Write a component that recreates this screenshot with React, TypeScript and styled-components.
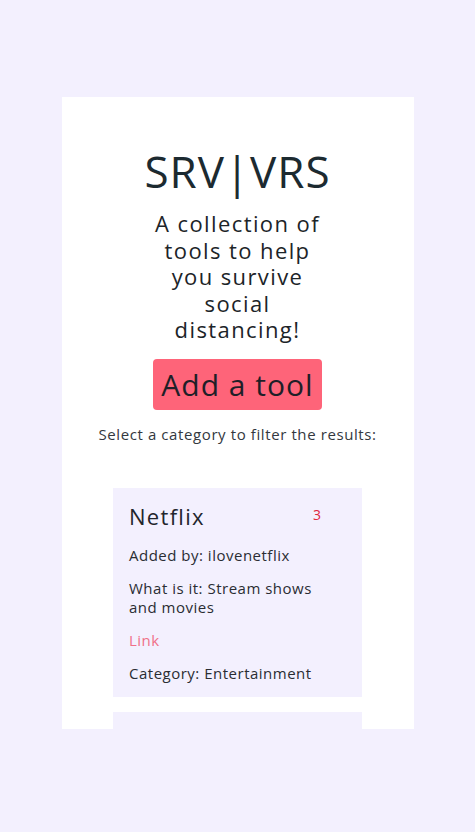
import React from "react";
import styled, { createGlobalStyle } from "styled-components";

const Global = createGlobalStyle`
  html, body { margin: 0; padding: 0; background: #f3f0fe; }
  body { font-family: "Open Sans", "Liberation Sans", sans-serif; color: #1f2428; }
`;

const Page = styled.div`
  padding-top: 97px;
  display: flex;
  justify-content: center;
`;

const Panel = styled.main`
  width: 352px;
  height: 632px;
  background: #ffffff;
  overflow: hidden;
  display: flex;
  flex-direction: column;
  align-items: center;
  box-sizing: border-box;
  padding-top: 47px;
  & > * { flex-shrink: 0; }
`;

const Title = styled.h1`
  margin: 0;
  font-size: 44px;
  font-weight: 400;
  line-height: 54px;
  letter-spacing: 1px;
  color: #1c2a30;
`;

const Subtitle = styled.h2`
  margin: 12px 0 0;
  width: 184px;
  text-align: center;
  font-size: 22px;
  font-weight: 400;
  line-height: 26.5px;
  letter-spacing: 1.4px;
  color: #1c2428;
`;

const AddButton = styled.button`
  margin-top: 16px;
  height: 51px;
  padding: 0 8px;
  border: none;
  border-radius: 4px;
  background: #fe6479;
  color: #1f1f28;
  font-family: inherit;
  font-size: 30px;
  font-weight: 400;
  letter-spacing: 1px;
  cursor: pointer;
`;

const FilterLabel = styled.p`
  margin: 15px 0 0;
  font-size: 15px;
  line-height: 19px;
  letter-spacing: 0.6px;
  color: #333840;
`;

const CardList = styled.section`
  margin-top: 44px;
  display: flex;
  flex-direction: column;
  gap: 15px;
`;

const Card = styled.article`
  width: 249px;
  box-sizing: border-box;
  background: #f3f0fe;
  padding: 14px 22px 14px 16px;
  display: flex;
  flex-direction: column;
  min-height: 208px;
`;

const CardHeader = styled.div`
  display: flex;
  justify-content: space-between;
  align-items: flex-start;
  padding-right: 19px;
  margin-bottom: 2px;
`;

const CardTitle = styled.h3`
  margin: 0;
  font-size: 22px;
  font-weight: 400;
  letter-spacing: 1.3px;
  line-height: 28px;
  color: #22252c;
`;

const Votes = styled.span`
  margin-top: 3px;
  font-size: 14px;
  color: #e0283e;
`;

const Field = styled.p`
  margin: 14px 0 0;
  font-size: 15px;
  line-height: 19px;
  letter-spacing: 0.5px;
  color: #2a2d33;
`;

const LinkText = styled.a`
  display: block;
  margin-top: 14px;
  font-size: 15px;
  line-height: 19px;
  letter-spacing: 0.5px;
  color: #f07088;
  text-decoration: none;
`;

export default function App() {
  return (
    <>
      <Global />
      <Page>
        <Panel>
          <Title>SRV|VRS</Title>
          <Subtitle>A collection of tools to help you survive social distancing!</Subtitle>
          <AddButton>Add a tool</AddButton>
          <FilterLabel>Select a category to filter the results:</FilterLabel>
          <CardList>
            <Card>
              <CardHeader>
                <CardTitle>Netflix</CardTitle>
                <Votes>3</Votes>
              </CardHeader>
              <Field>Added by: ilovenetflix</Field>
              <Field>What is it: Stream shows and movies</Field>
              <LinkText href="#">Link</LinkText>
              <Field>Category: Entertainment</Field>
            </Card>
            <Card />
          </CardList>
        </Panel>
      </Page>
    </>
  );
}
